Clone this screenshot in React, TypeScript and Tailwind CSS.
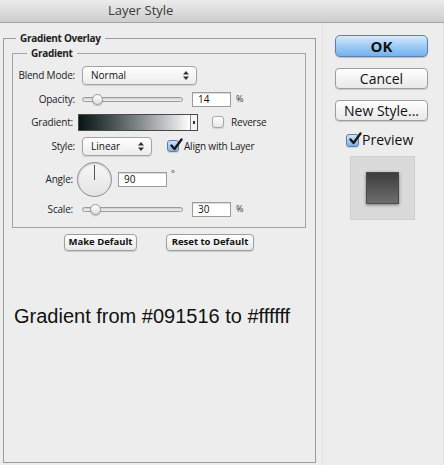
import { FC, ReactNode } from "react";

const ui = "font-['Open_Sans',sans-serif]";

const Label: FC<{ children: ReactNode; w?: string }> = ({ children, w = "w-[62px]" }) => (
  <span className={`${w} shrink-0 text-right text-[10px] tracking-[-0.2px] text-[#222]`}>{children}</span>
);

const UpDown: FC = () => (
  <svg width="6" height="9" viewBox="0 0 6 9" className="shrink-0">
    <path d="M3 0 L6 3.5 L0 3.5 Z M3 9 L6 5.5 L0 5.5 Z" fill="#333" />
  </svg>
);

const Select: FC<{ value: string; w: string }> = ({ value, w }) => (
  <div
    className={`${w} flex h-[19px] items-center justify-between rounded-[4px] border border-[#a3a3a3] bg-gradient-to-b from-white to-[#ececec] pl-[8px] pr-[7px] text-[10px] text-[#111] shadow-[0_1px_1px_rgba(0,0,0,0.12)]`}
  >
    <span>{value}</span>
    <UpDown />
  </div>
);

const Slider: FC<{ knob: number }> = ({ knob }) => (
  <div className="relative h-[11px] w-[101px]">
    <div className="absolute left-0 right-0 top-[3px] h-[5px] rounded-full border border-[#9a9a9a] bg-gradient-to-b from-[#cfcfcf] to-[#f4f4f4]" />
    <div
      className="absolute top-0 h-[11px] w-[11px] rounded-full border border-[#9a9a9a] bg-gradient-to-b from-white to-[#dedede] shadow-[0_1px_1px_rgba(0,0,0,0.2)]"
      style={{ left: knob }}
    />
  </div>
);

const Field: FC<{ value: string; w: string }> = ({ value, w }) => (
  <div
    className={`${w} flex h-[15px] items-center border border-[#9c9c9c] bg-white pl-[5px] text-[10px] text-[#111] shadow-[inset_0_1px_1px_rgba(0,0,0,0.15)]`}
  >
    {value}
  </div>
);

const Check: FC<{ checked?: boolean; size?: string }> = ({ checked, size = "h-[12px] w-[12px]" }) => (
  <div
    className={`${size} relative shrink-0 rounded-[3px] border ${
      checked
        ? "border-[#5c7ea6] bg-gradient-to-b from-[#cfe4f9] to-[#7fb2e5]"
        : "border-[#a6a6a6] bg-gradient-to-b from-white to-[#e6e6e6]"
    } shadow-[0_1px_1px_rgba(0,0,0,0.12)]`}
  >
    {checked && (
      <svg viewBox="0 0 14 14" className="absolute -top-[3px] left-[1px] h-[14px] w-[14px]">
        <path d="M2.5 7.5 L5.5 11 L12.5 1.5" fill="none" stroke="#1a1a1a" strokeWidth="2.4" strokeLinecap="round" strokeLinejoin="round" />
      </svg>
    )}
  </div>
);

const Button: FC<{ children: ReactNode; className?: string }> = ({ children, className = "" }) => (
  <div
    className={`flex items-center justify-center rounded-[4px] border border-[#9d9d9d] bg-gradient-to-b from-white to-[#e9e9e9] text-[#111] shadow-[0_1px_1px_rgba(0,0,0,0.15)] ${className}`}
  >
    {children}
  </div>
);

export default function App() {
  return (
    <div className={`h-[465px] w-[444px] overflow-hidden bg-[#ededed] ${ui}`}>
      <div className="flex h-[23px] items-center border-b border-[#a4a4a4] bg-gradient-to-b from-[#ececec] to-[#cdcdcd] pl-[108px] text-[13px] text-[#3a3a3a]">
        Layer Style
      </div>

      <div className="flex">
        <fieldset className="ml-[3px] mt-[8px] h-[432px] w-[313px] border border-[#9b9b9b] pl-[8px] pr-[9px]">
          <legend className="ml-[4px] px-[4px] text-[10px] font-bold leading-[15px] tracking-[-0.3px] text-[#222]">
            Gradient Overlay
          </legend>

          <fieldset className="h-[182px] w-[294px] border border-[#a3a3a3]">
            <legend className="ml-[14px] px-[4px] text-[10px] font-bold leading-[15px] tracking-[-0.3px] text-[#222]">
              Gradient
            </legend>

            <div className="mt-[4px] flex h-[20px] items-center">
              <Label>Blend Mode:</Label>
              <div className="ml-[7px]">
                <Select value="Normal" w="w-[115px]" />
              </div>
            </div>

            <div className="mt-[4px] flex h-[20px] items-center">
              <Label>Opacity:</Label>
              <div className="ml-[7px] flex items-center">
                <Slider knob={10} />
                <div className="ml-[9px]">
                  <Field value="14" w="w-[39px]" />
                </div>
                <span className="ml-[5px] text-[9px] text-[#333]">%</span>
              </div>
            </div>

            <div className="mt-[3px] flex h-[20px] items-center">
              <Label w="w-[60px]">Gradient:</Label>
              <div className="ml-[5px] flex h-[17px] items-stretch border border-[#4a4a4a]">
                <div className="w-[111px] bg-gradient-to-r from-[#091516] to-white" />
                <div className="flex w-[7px] items-center justify-center border-l border-[#888] bg-[#f4f4f4]">
                  <span className="h-[3px] w-[2px] bg-[#333]" />
                </div>
              </div>
              <div className="ml-[14px] flex items-center">
                <Check />
                <span className="ml-[7px] text-[10px] tracking-[-0.2px] text-[#222]">Reverse</span>
              </div>
            </div>

            <div className="mt-[4px] flex h-[20px] items-center">
              <Label>Style:</Label>
              <div className="ml-[7px]">
                <Select value="Linear" w="w-[70px]" />
              </div>
              <div className="ml-[15px] flex items-center">
                <Check checked />
                <span className="ml-[5px] text-[10px] tracking-[-0.2px] text-[#222]">Align with Layer</span>
              </div>
            </div>

            <div className="mt-[5px] flex h-[36px] items-center">
              <Label w="w-[60px]">Angle:</Label>
              <div className="relative ml-[4px] h-[35px] w-[35px] rounded-full border border-[#8d8d8d] bg-gradient-to-b from-[#f7f7f7] to-[#e4e4e4] shadow-[inset_0_1px_2px_rgba(0,0,0,0.2)]">
                <div className="absolute left-[16px] top-[2px] h-[15px] w-[1px] bg-[#555]" />
              </div>
              <div className="ml-[6px] mt-[11px] self-start">
                <Field value="90" w="w-[49px]" />
              </div>
              <span className="ml-[4px] mt-[6px] self-start text-[9px] text-[#333]">°</span>
            </div>

            <div className="mt-[2px] flex h-[20px] items-center">
              <Label w="w-[60px]">Scale:</Label>
              <div className="ml-[9px] flex items-center">
                <Slider knob={8} />
                <div className="ml-[9px]">
                  <Field value="30" w="w-[39px]" />
                </div>
                <span className="ml-[5px] text-[9px] text-[#333]">%</span>
              </div>
            </div>
          </fieldset>

          <div className="mt-[6px] flex justify-center gap-[29px] text-[9.5px] font-bold">
            <Button className="h-[17px] w-[73px]">Make Default</Button>
            <Button className="h-[17px] w-[88px]">Reset to Default</Button>
          </div>

          <p className="mt-[54px] pl-[2px] font-['Liberation_Sans',Arial,sans-serif] text-[20px] leading-[23px] text-[#111]">
            Gradient from #091516 to #ffffff
          </p>
        </fieldset>

        <div className="ml-[6px] flex h-[442px] w-[122px] flex-col border-x border-[#e2e2e2] pl-[12px] pt-[12px]">
          <div className="flex h-[22px] w-[93px] items-center justify-center rounded-[5px] border border-[#5b80ab] bg-gradient-to-b from-[#d8ebfc] via-[#9fcbf4] to-[#73b3ee] text-[15px] font-bold text-[#111] shadow-[0_1px_1px_rgba(0,0,0,0.2)]">
            OK
          </div>
          <Button className="mt-[11px] h-[21px] w-[93px] text-[14px]">Cancel</Button>
          <Button className="mt-[11px] h-[21px] w-[93px] text-[14px]">New Style...</Button>
          <div className="mt-[11px] flex items-center pl-[11px]">
            <Check checked size="h-[13px] w-[13px]" />
            <span className="ml-[3px] text-[14px] leading-[16px] text-[#111]">Preview</span>
          </div>
          <div className="ml-[15px] mt-[8px] flex h-[64px] w-[65px] items-center justify-center border border-[#cfcfcf] bg-[#dadada]">
            <div className="h-[32px] w-[33px] border border-[#4a4a4a] bg-gradient-to-b from-[#3d3d3d] to-[#6e6e6e] shadow-[0_1px_3px_rgba(0,0,0,0.45)]" />
          </div>
        </div>
      </div>
    </div>
  );
}
